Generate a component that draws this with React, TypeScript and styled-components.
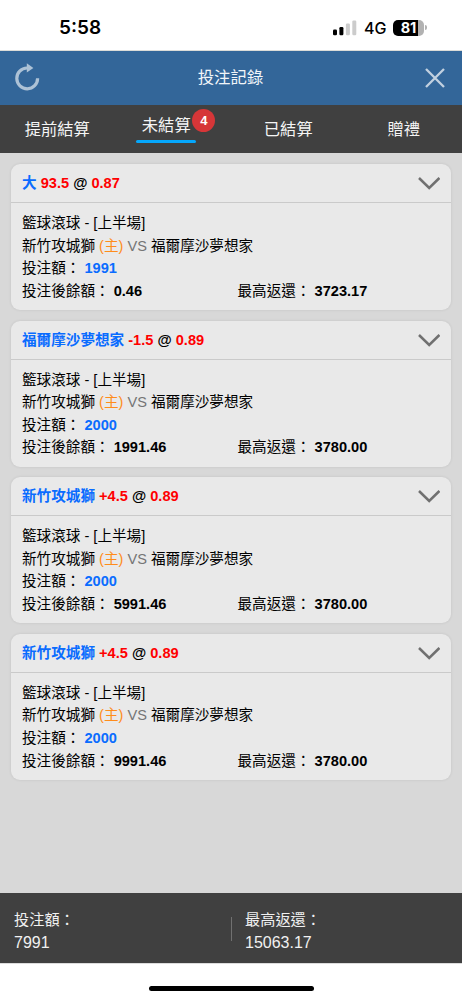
import React from "react";
import styled, { createGlobalStyle } from "styled-components";

const GlobalStyle = createGlobalStyle`
  * { box-sizing: border-box; }
  body {
    margin: 0;
    background: #fff;
    font-family: "Liberation Sans", "Noto Sans CJK TC", sans-serif;
    color: #000;
  }
`;

const Screen = styled.div`
  width: 462px;
  height: 1000px;
  display: flex;
  flex-direction: column;
  overflow: hidden;
`;

const StatusBar = styled.div`
  flex: none;
  height: 51px;
  padding: 5px 35px 0 59px;
  display: flex;
  align-items: center;
  justify-content: space-between;
  font-family: Inter, sans-serif;
  border-bottom: 1px solid #dcdcd8;
`;

const Clock = styled.span`
  font-size: 19px;
  font-weight: 600;
`;

const StatusIcons = styled.div`
  display: flex;
  align-items: center;
`;

const Network = styled.span`
  width: 22px;
  margin: 1px 7px 0 7px;
  font-size: 16px;
  font-weight: 500;
  white-space: nowrap;
`;

const Battery = styled.div`
  width: 31px;
  height: 16px;
  border-radius: 5px;
  background: linear-gradient(90deg, #000 25px, #b2b2b2 25px);
  color: #fff;
  font-size: 14.5px;
  font-weight: 700;
  line-height: 16px;
  text-align: center;
`;

const BatteryTip = styled.span`
  width: 2px;
  height: 5px;
  margin-left: 1px;
  border-radius: 0 2px 2px 0;
  background: #b2b2b2;
`;

const TitleBar = styled.header`
  flex: none;
  height: 54px;
  padding: 0 17px 3px 14px;
  display: flex;
  align-items: center;
  justify-content: space-between;
  background: #336699;
  color: #f1f5f9;
`;

const Title = styled.h1`
  margin: 0 4px 1px 0;
  font-size: 16.4px;
  font-weight: 400;
`;

const CloseButton = styled.span`
  display: flex;
  padding-top: 2px;
`;

const Tabs = styled.nav`
  flex: none;
  height: 48px;
  display: grid;
  grid-template-columns: repeat(4, 1fr);
  background: #404040;
  color: #f5f5f5;
  font-size: 16.3px;
`;

const Tab = styled.div`
  display: flex;
  align-items: center;
  justify-content: center;
  padding: 0 1px 2px 0;
`;

const ActiveLabel = styled.div`
  position: relative;
  width: 60px;
  height: 33px;
  margin: 0 13px 3px 0;
  line-height: 31px;
  text-align: center;
`;

const Underline = styled.span`
  position: absolute;
  left: 0;
  bottom: 0;
  width: 60px;
  height: 3px;
  border-radius: 1.5px;
  background: #05a7fb;
`;

const Badge = styled.span`
  position: absolute;
  left: 56px;
  top: -1px;
  width: 23px;
  height: 23px;
  border-radius: 50%;
  background: #d63638;
  color: #fff;
  font-size: 13px;
  font-weight: 700;
  line-height: 23px;
  text-align: center;
`;

const BetList = styled.main`
  flex: 1;
  padding: 11px 11px 0;
  display: flex;
  flex-direction: column;
  gap: 10.6px;
  background: #d8d8d8;
`;

const Card = styled.article`
  height: 146px;
  border-radius: 9px;
  background: #e9e9e9;
  box-shadow: 0 0 3px rgba(0, 0, 0, 0.1);
  font-size: 14.6px;
`;

const CardHeader = styled.div`
  height: 39px;
  padding: 0 11px;
  display: flex;
  align-items: center;
  justify-content: space-between;
  border-bottom: 1px solid #cacaca;
  font-weight: 700;
`;

const Selection = styled.span`
  padding-bottom: 3px;
`;

const CardBody = styled.div`
  padding: 9px 11px 0;
  line-height: 22.6px;
`;

const Line = styled.div`
  height: 22.6px;
  white-space: pre;
`;

const SplitLine = styled(Line)`
  display: flex;
`;

const Cell = styled.div`
  flex: none;
  width: 215.5px;
`;

const Ink = styled.span<{ $color: string; $bold?: boolean }>`
  color: ${(p) => p.$color};
  font-weight: ${(p) => (p.$bold ? 700 : "inherit")};
`;

const Summary = styled.footer`
  flex: none;
  height: 70px;
  padding: 15px 0 0 14px;
  display: flex;
  background: #404040;
  color: #f1f1f1;
`;

const Total = styled.div<{ $divided?: boolean }>`
  position: relative;
  width: ${(p) => (p.$divided ? "231px" : "auto")};
  font-size: 15.2px;
  line-height: 23px;
`;

const Divider = styled.span`
  position: absolute;
  left: 217px;
  top: 9px;
  width: 1px;
  height: 24px;
  background: #707070;
`;

const Amount = styled.div`
  font-size: 16px;
`;

const HomeArea = styled.div`
  flex: none;
  height: 37px;
  padding-top: 22px;
  display: flex;
  justify-content: center;
  border-top: 1px solid #dcdcdc;
`;

const HomeIndicator = styled.div`
  width: 165px;
  height: 5px;
  border-radius: 3px;
  background: #000;
`;

const bets = [
  { pick: "大", line: "93.5", odds: "0.87", stake: "1991", balance: "0.46", payout: "3723.17" },
  { pick: "福爾摩沙夢想家", line: "-1.5", odds: "0.89", stake: "2000", balance: "1991.46", payout: "3780.00" },
  { pick: "新竹攻城獅", line: "+4.5", odds: "0.89", stake: "2000", balance: "5991.46", payout: "3780.00" },
  { pick: "新竹攻城獅", line: "+4.5", odds: "0.89", stake: "2000", balance: "9991.46", payout: "3780.00" },
];

const SignalIcon = () => (
  <svg width="24" height="16" viewBox="0 0 24 16">
    <rect x="0" y="9.5" width="4" height="5.8" rx="1.2" />
    <rect x="6.4" y="7" width="4" height="8.3" rx="1.2" />
    <rect x="12.9" y="3.6" width="4" height="11.7" rx="1.2" fill="#ccc" />
    <rect x="19.3" y="0.5" width="4" height="14.8" rx="1.2" fill="#ccc" />
  </svg>
);

const RefreshIcon = () => (
  <svg width="26" height="28" viewBox="0 0 26 28" fill="none">
    <path d="M14 5 L13 5 A10.4 10.4 0 1 0 23.6 15.3" stroke="#adc2d6" strokeWidth="3.2" />
    <path d="M12.8 0.3 L19.4 4.9 L12.8 9.5 Z" fill="#adc2d6" />
  </svg>
);

const CloseIcon = () => (
  <svg width="20" height="20" viewBox="0 0 20 20" fill="none" stroke="#c2d1e0" strokeWidth="2.3">
    <path d="M1 1 L19 19 M19 1 L1 19" />
  </svg>
);

const ChevronIcon = () => (
  <svg width="22" height="14" viewBox="0 0 22 14" fill="none" stroke="#707070" strokeWidth="2.5">
    <path d="M1 2 L11.2 12 L21.4 2" />
  </svg>
);

export default function App() {
  return (
    <Screen lang="zh-Hant">
      <GlobalStyle />
      <StatusBar>
        <Clock>5:58</Clock>
        <StatusIcons>
          <SignalIcon />
          <Network>4G</Network>
          <Battery>81</Battery>
          <BatteryTip />
        </StatusIcons>
      </StatusBar>
      <TitleBar>
        <RefreshIcon />
        <Title>投注記錄</Title>
        <CloseButton>
          <CloseIcon />
        </CloseButton>
      </TitleBar>
      <Tabs>
        <Tab>提前結算</Tab>
        <Tab>
          <ActiveLabel>
            未結算
            <Underline />
            <Badge>4</Badge>
          </ActiveLabel>
        </Tab>
        <Tab>已結算</Tab>
        <Tab>贈禮</Tab>
      </Tabs>
      <BetList>
        {bets.map((bet, i) => (
          <Card key={i}>
            <CardHeader>
              <Selection>
                <Ink $color="#0a6cff">{bet.pick}</Ink> <Ink $color="#ff0000">{bet.line}</Ink> @{" "}
                <Ink $color="#ff0000">{bet.odds}</Ink>
              </Selection>
              <ChevronIcon />
            </CardHeader>
            <CardBody>
              <Line>籃球滾球 - [上半場]</Line>
              <Line>
                新竹攻城獅 <Ink $color="#ff8c1a">(主)</Ink> <Ink $color="#757575">VS</Ink> 福爾摩沙夢想家
              </Line>
              <Line>
                投注額： <Ink $color="#0a6cff" $bold>{bet.stake}</Ink>
              </Line>
              <SplitLine>
                <Cell>
                  投注後餘額： <Ink $color="#000" $bold>{bet.balance}</Ink>
                </Cell>
                <Cell>
                  最高返還： <Ink $color="#000" $bold>{bet.payout}</Ink>
                </Cell>
              </SplitLine>
            </CardBody>
          </Card>
        ))}
      </BetList>
      <Summary>
        <Total $divided>
          投注額：
          <Amount>7991</Amount>
          <Divider />
        </Total>
        <Total>
          最高返還：
          <Amount>15063.17</Amount>
        </Total>
      </Summary>
      <HomeArea>
        <HomeIndicator />
      </HomeArea>
    </Screen>
  );
}
